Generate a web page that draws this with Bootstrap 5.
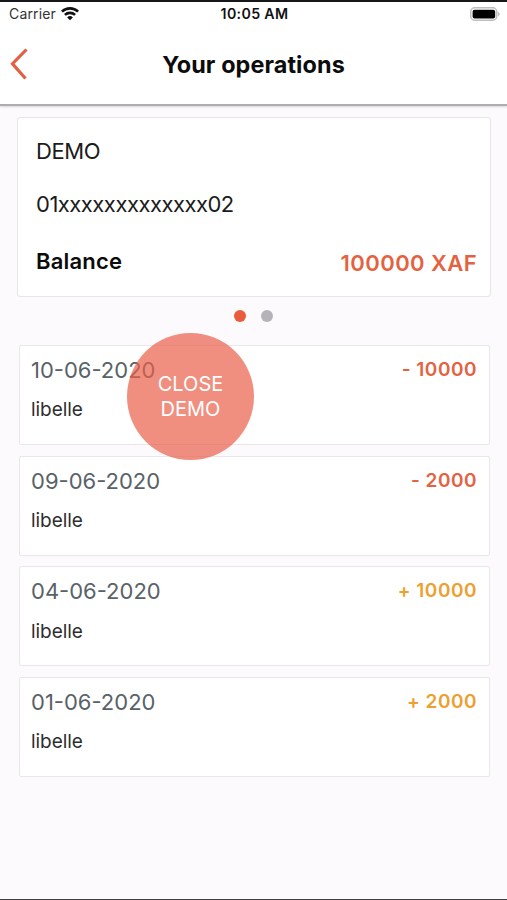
<!DOCTYPE html>
<html lang="en">
<head>
<meta charset="utf-8">
<meta name="viewport" content="width=device-width, initial-scale=1">
<title>Your operations</title>
<link rel="stylesheet" href="https://cdn.jsdelivr.net/npm/bootstrap@5.3.0/dist/css/bootstrap.min.css">
<style>
  body { font-family: Inter, "Liberation Sans", sans-serif; background: #fcfafd; color: #1b1b1b; }
  .screen { height: 900px; border-top: 2px solid #17171a; border-bottom: 1px solid #3f3f42; overflow: hidden; }
  .app-head { height: 104px; background: #fff; border-bottom: 2px solid #adacae; box-shadow: 0 1px 2px rgba(0,0,0,.15); }
  .status { height: 24px; padding: 0 7px 0 9px; font-size: 14px; line-height: 24px; }
  .status > * { flex: 1 1 0; }
  .carrier { letter-spacing: .15px; color: #333; }
  .clock { font-weight: 600; color: #111; font-size: 14.2px; letter-spacing: .35px; }
  .title-bar { height: 77px; padding: 0 10px; }
  .title-bar > :not(h1) { width: 18px; }
  .title-bar svg { margin-top: -2px; }
  .title-bar h1 { font-size: 23.4px; font-weight: 700; line-height: 28px; letter-spacing: .1px; color: #0c0c0c; }
  .account { margin: 11px 16px 0 17px; height: 180px; padding: 18px 13px 0 18px; border: 1.5px solid #e6e5e8; border-radius: 3px; font-size: 22px; line-height: 30px; }
  .acc-name { letter-spacing: -.4px; }
  .acc-no { margin-top: 23px; letter-spacing: -.5px; }
  .balance { margin-top: 27px; }
  .balance strong { font-weight: 600; color: #0c0c0c; letter-spacing: .2px; }
  .amt { color: #e4623f; font-weight: 600; }
  .amt.credit { color: #eda030; }
  .balance .amt { letter-spacing: .42px; margin-top: 2px; }
  .dots { height: 48px; gap: 15.5px; padding-top: 12.5px; }
  .dots span { width: 12px; height: 12px; border-radius: 50%; background: #b5b3b8; }
  .dots .on { background: #ea5b3c; }
  .ops { margin: 0 17.5px 0 18.5px; gap: 10.6px; }
  .op { height: 100px; padding: 9px 11.5px 0 11.5px; border: 1.5px solid #e8e7ea; border-radius: 2px; }
  .date { font-size: 22px; line-height: 30px; color: #596267; letter-spacing: 0; }
  .op .amt { font-size: 19px; line-height: 30px; letter-spacing: .5px; }
  .label { font-size: 19px; line-height: 26px; margin-top: 12.4px; color: #2e2e2e; letter-spacing: -.05px; }
  .close-demo { left: 127px; top: 331px; width: 127px; height: 127px; border: 0; border-radius: 50%; background: rgba(234,95,74,.7); color: #fff; font-size: 20px; line-height: 24.5px; padding: 0; }
</style>
</head>
<body>
<div class="screen position-relative">
  <header class="app-head">
    <div class="status d-flex">
      <div class="d-flex align-items-center"><span class="carrier">Carrier</span>
        <svg class="ms-1" width="20" height="16" viewBox="0 0 20 16" fill="none" stroke="#111" stroke-width="2.6"><path d="M1.9 5.6a11.8 11.8 0 0 1 16.2 0M4.9 8.9a7.4 7.4 0 0 1 10.2 0"/><path d="M10 14.3 7.1 11.4a4.1 4.1 0 0 1 5.8 0z" fill="#111" stroke="none"/></svg>
      </div>
      <div class="clock text-center">10:05 AM</div>
      <div class="d-flex justify-content-end align-items-center">
        <svg width="30" height="14" viewBox="0 0 30 14"><rect x=".75" y=".75" width="26" height="12.5" rx="4" fill="#fff" stroke="#bdbdbd" stroke-width="1.5"/><rect x="2.6" y="2.7" width="22.6" height="8.8" rx="2" fill="#000"/><path d="M28.2 4.7q2.8 2.3 0 4.6z" fill="#aaa"/></svg>
      </div>
    </div>
    <div class="title-bar d-flex align-items-center justify-content-between">
      <svg width="18" height="32" viewBox="0 0 18 32" fill="none" stroke="#e35f42" stroke-width="3.2"><path d="M16.5 1.5 2.5 15.7 15.5 30.5"/></svg>
      <h1 class="m-0">Your operations</h1>
      <span></span>
    </div>
  </header>

  <section class="account bg-white">
    <div class="acc-name">DEMO</div>
    <div class="acc-no">01xxxxxxxxxxxxx02</div>
    <div class="balance d-flex justify-content-between"><strong>Balance</strong><span class="amt">100000 XAF</span></div>
  </section>

  <div class="dots d-flex justify-content-center"><span class="on"></span><span></span></div>

  <section class="ops d-flex flex-column">
    <article class="op bg-white">
      <div class="d-flex justify-content-between"><span class="date">10-06-2020</span><span class="amt">- 10000</span></div>
      <div class="label">libelle</div>
    </article>
    <article class="op bg-white">
      <div class="d-flex justify-content-between"><span class="date">09-06-2020</span><span class="amt">- 2000</span></div>
      <div class="label">libelle</div>
    </article>
    <article class="op bg-white">
      <div class="d-flex justify-content-between"><span class="date">04-06-2020</span><span class="amt credit">+ 10000</span></div>
      <div class="label">libelle</div>
    </article>
    <article class="op bg-white">
      <div class="d-flex justify-content-between"><span class="date">01-06-2020</span><span class="amt credit">+ 2000</span></div>
      <div class="label">libelle</div>
    </article>
  </section>

  <button type="button" class="close-demo position-absolute">CLOSE<br>DEMO</button>
</div>
<script src="https://cdn.jsdelivr.net/npm/bootstrap@5.3.0/dist/js/bootstrap.bundle.min.js"></script>
</body>
</html>
